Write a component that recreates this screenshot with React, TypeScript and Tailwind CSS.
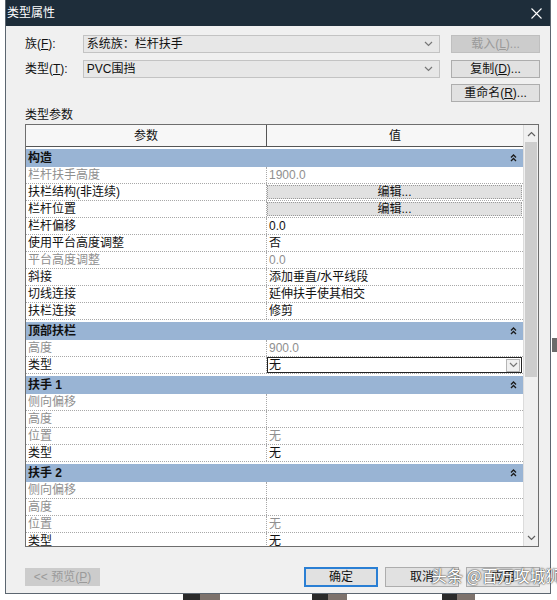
import React from 'react';

type Row = {
  label: string;
  value?: string;
  gray?: boolean;
  kind?: 'text' | 'button' | 'select';
};

type Group = { title: string; rows: Row[] };

const GROUPS: Group[] = [
  {
    title: '构造',
    rows: [
      { label: '栏杆扶手高度', value: '1900.0', gray: true },
      { label: '扶栏结构(非连续)', value: '编辑...', kind: 'button' },
      { label: '栏杆位置', value: '编辑...', kind: 'button' },
      { label: '栏杆偏移', value: '0.0' },
      { label: '使用平台高度调整', value: '否' },
      { label: '平台高度调整', value: '0.0', gray: true },
      { label: '斜接', value: '添加垂直/水平线段' },
      { label: '切线连接', value: '延伸扶手使其相交' },
      { label: '扶栏连接', value: '修剪' },
    ],
  },
  {
    title: '顶部扶栏',
    rows: [
      { label: '高度', value: '900.0', gray: true },
      { label: '类型', value: '无', kind: 'select' },
    ],
  },
  {
    title: '扶手 1',
    rows: [
      { label: '侧向偏移', value: '', gray: true },
      { label: '高度', value: '', gray: true },
      { label: '位置', value: '无', gray: true },
      { label: '类型', value: '无' },
    ],
  },
  {
    title: '扶手 2',
    rows: [
      { label: '侧向偏移', value: '', gray: true },
      { label: '高度', value: '', gray: true },
      { label: '位置', value: '无', gray: true },
      { label: '类型', value: '无' },
    ],
  },
];

const FONT = "font-['Liberation_Sans','Noto_Sans_CJK_SC',sans-serif]";

function Chevron({ up = false, className = '' }: { up?: boolean; className?: string }) {
  return (
    <svg width="9" height="6" viewBox="0 0 9 6" className={className}>
      <path
        d={up ? 'M1 5 L4.5 1.5 L8 5' : 'M1 1 L4.5 4.5 L8 1'}
        fill="none"
        stroke="currentColor"
        strokeWidth="1.2"
      />
    </svg>
  );
}

function Collapse() {
  return (
    <svg width="7" height="8" viewBox="0 0 7 8" className="text-[#1a1a1a]">
      <path d="M1 3.5 L3.5 1 L6 3.5 M1 7 L3.5 4.5 L6 7" fill="none" stroke="currentColor" strokeWidth="1.3" />
    </svg>
  );
}

function Btn({ children, disabled = false }: { children: React.ReactNode; disabled?: boolean }) {
  return (
    <div
      className={`w-[89px] h-[18px] flex items-center justify-center text-[12px] border ${
        disabled ? 'bg-[#cccccc] border-[#bfbfbf] text-[#9a9a9a]' : 'bg-[#e1e1e1] border-[#adadad] text-[#111]'
      }`}
    >
      {children}
    </div>
  );
}

function ValueCell({ row }: { row: Row }) {
  if (row.kind === 'button') {
    return (
      <div className="h-full py-[1px] pr-[1px]">
        <div className="h-full bg-[#e1e1e1] border border-dotted border-[#9a9a9a] flex items-center justify-center text-[12px] text-[#111]">
          {row.value}
        </div>
      </div>
    );
  }
  if (row.kind === 'select') {
    return (
      <div className="h-full pr-[1px]">
        <div className="h-full bg-white border border-[#222] flex items-center justify-between pl-[1px] pr-[1px] text-[12px] text-[#111]">
          <span>{row.value}</span>
          <div className="w-[14px] h-[13px] bg-[#f0f0f0] border border-[#b5b5b5] flex items-center justify-center text-[#777]">
            <Chevron />
          </div>
        </div>
      </div>
    );
  }
  return (
    <div className={`h-full flex items-center pl-[2px] text-[12px] ${row.gray ? 'text-[#8f8f8f]' : 'text-[#111]'}`}>
      {row.value}
    </div>
  );
}

export default function App() {
  return (
    <div className={`relative w-[557px] h-[600px] bg-white overflow-hidden ${FONT}`}>
      {/* Dialog */}
      <div className="ml-[5px] w-[546px] h-[594px] flex flex-col bg-[#f0f0f0] border-x border-b border-[#5c6670]">
        {/* Title bar */}
        <div className="h-[26px] bg-[#1e2d3a] flex items-center justify-between pl-[1px] pr-[8px]">
          <span className="text-[12px] text-white">类型属性</span>
          <svg width="11" height="11" viewBox="0 0 11 11" className="text-white">
            <path d="M0.5 0.5 L10.5 10.5 M10.5 0.5 L0.5 10.5" stroke="currentColor" strokeWidth="1.1" />
          </svg>
        </div>

        <div className="flex-1 pl-[19px] pr-[10px] pt-[9px] flex flex-col">
          {/* Family */}
          <div className="flex items-center h-[18px]">
            <div className="w-[58px] text-[12px] text-[#111]">
              族(<u>F</u>):
            </div>
            <div className="w-[358px] h-full bg-[#e7e7e7] border border-[#c3c3c3] flex items-center justify-between pl-[3px] pr-[6px] text-[12px] text-[#111]">
              <span>系统族：栏杆扶手</span>
              <Chevron className="text-[#777]" />
            </div>
            <div className="ml-[11px]">
              <Btn disabled>
                载入(<u>L</u>)...
              </Btn>
            </div>
          </div>

          {/* Type */}
          <div className="flex items-center h-[18px] mt-[7px]">
            <div className="w-[58px] text-[12px] text-[#111]">
              类型(<u>T</u>):
            </div>
            <div className="w-[358px] h-full bg-[#e7e7e7] border border-[#c3c3c3] flex items-center justify-between pl-[3px] pr-[6px] text-[12px] text-[#111]">
              <span>PVC围挡</span>
              <Chevron className="text-[#777]" />
            </div>
            <div className="ml-[11px]">
              <Btn>
                复制(<u>D</u>)...
              </Btn>
            </div>
          </div>

          <div className="flex justify-end mt-[6px]">
            <Btn>
              重命名(<u>R</u>)...
            </Btn>
          </div>

          <div className="mt-[4px] h-[17px] text-[12px] text-[#111] flex items-center">类型参数</div>

          {/* Table */}
          <div className="mt-[1px] w-[514px] h-[423px] border border-[#6e6e6e] flex overflow-hidden">
            <div className="w-[497px] bg-white flex flex-col overflow-hidden">
              <div className="h-[22px] shrink-0 flex bg-[#f7f7f7] border-b border-[#555]">
                <div className="w-[241px] border-r border-[#555] flex items-center justify-center text-[12px] text-[#111]">
                  参数
                </div>
                <div className="flex-1 flex items-center justify-center text-[12px] text-[#111]">值</div>
              </div>
              {GROUPS.map((g) => (
                <div key={g.title} className="shrink-0">
                  <div className="h-[20px] pt-[2px]">
                    <div className="h-[18px] bg-[#99b4d4] flex items-center justify-between pl-[2px] pr-[6px]">
                      <span className="text-[12px] font-bold text-[#111]">{g.title}</span>
                      <Collapse />
                    </div>
                  </div>
                  {g.rows.map((r, i) => (
                    <div key={i} className="h-[17px] flex border-b border-dotted border-[#a8a8a8]">
                      <div
                        className={`w-[241px] border-r border-dotted border-[#a8a8a8] flex items-center pl-[2px] text-[12px] ${
                          r.gray ? 'text-[#8f8f8f]' : 'text-[#111]'
                        }`}
                      >
                        {r.label}
                      </div>
                      <div className="flex-1">
                        <ValueCell row={r} />
                      </div>
                    </div>
                  ))}
                </div>
              ))}
            </div>

            {/* Scrollbar */}
            <div className="flex-1 bg-[#f0f0f0] border-l border-[#dcdcdc] flex flex-col items-center">
              <div className="h-[17px] flex items-center justify-center text-[#606060]">
                <Chevron up />
              </div>
              <div className="w-[12px] h-[235px] bg-[#cdcdcd]" />
              <div className="flex-1" />
              <div className="h-[17px] flex items-center justify-center text-[#606060]">
                <Chevron />
              </div>
            </div>
          </div>

          {/* Bottom buttons */}
          <div className="flex items-center h-[21px] mt-[19px]">
            <div className="w-[75px] h-[18px] bg-[#cccccc] flex items-center justify-center text-[12px] text-[#9a9a9a]">
              &lt;&lt; 预览(<u>P</u>)
            </div>
            <div className="flex-1" />
            <div className="w-[74px] h-[20px] bg-[#e1e1e1] border-2 border-[#2a7fd4] flex items-center justify-center text-[12px] text-[#111]">
              确定
            </div>
            <div className="ml-[7px] w-[74px] h-[20px] bg-[#e1e1e1] border border-[#adadad] flex items-center justify-center text-[12px] text-[#111]">
              取消
            </div>
            <div className="ml-[7px] w-[74px] h-[20px] bg-[#e1e1e1] border border-[#adadad] flex items-center justify-center text-[12px] text-[#111]">
              应用
            </div>
          </div>
        </div>
      </div>

      {/* Background peeking below dialog */}
      <div className="flex h-[6px]">
        <div className="ml-[183px] w-[17px] bg-[#2a2a2a]" />
        <div className="w-[20px] bg-[#7d726c]" />
        <div className="ml-[92px] w-[16px] bg-[#2a2a2a]" />
        <div className="w-[19px] bg-[#7d726c]" />
        <div className="ml-[95px] w-[15px] bg-[#2a2a2a]" />
        <div className="w-[18px] bg-[#7d726c]" />
      </div>
      <div className="absolute left-[552px] top-[338px] w-[5px] h-[14px] bg-[#6b6b6b]" />

      {/* Watermark */}
      <div className="absolute left-[431px] top-[563px] text-[16px] text-white [text-shadow:0_0_2px_#333,0_0_1px_#333] font-['Noto_Sans_CJK_SC',sans-serif] whitespace-nowrap">
        头条 @百万攻城狮
      </div>
    </div>
  );
}
